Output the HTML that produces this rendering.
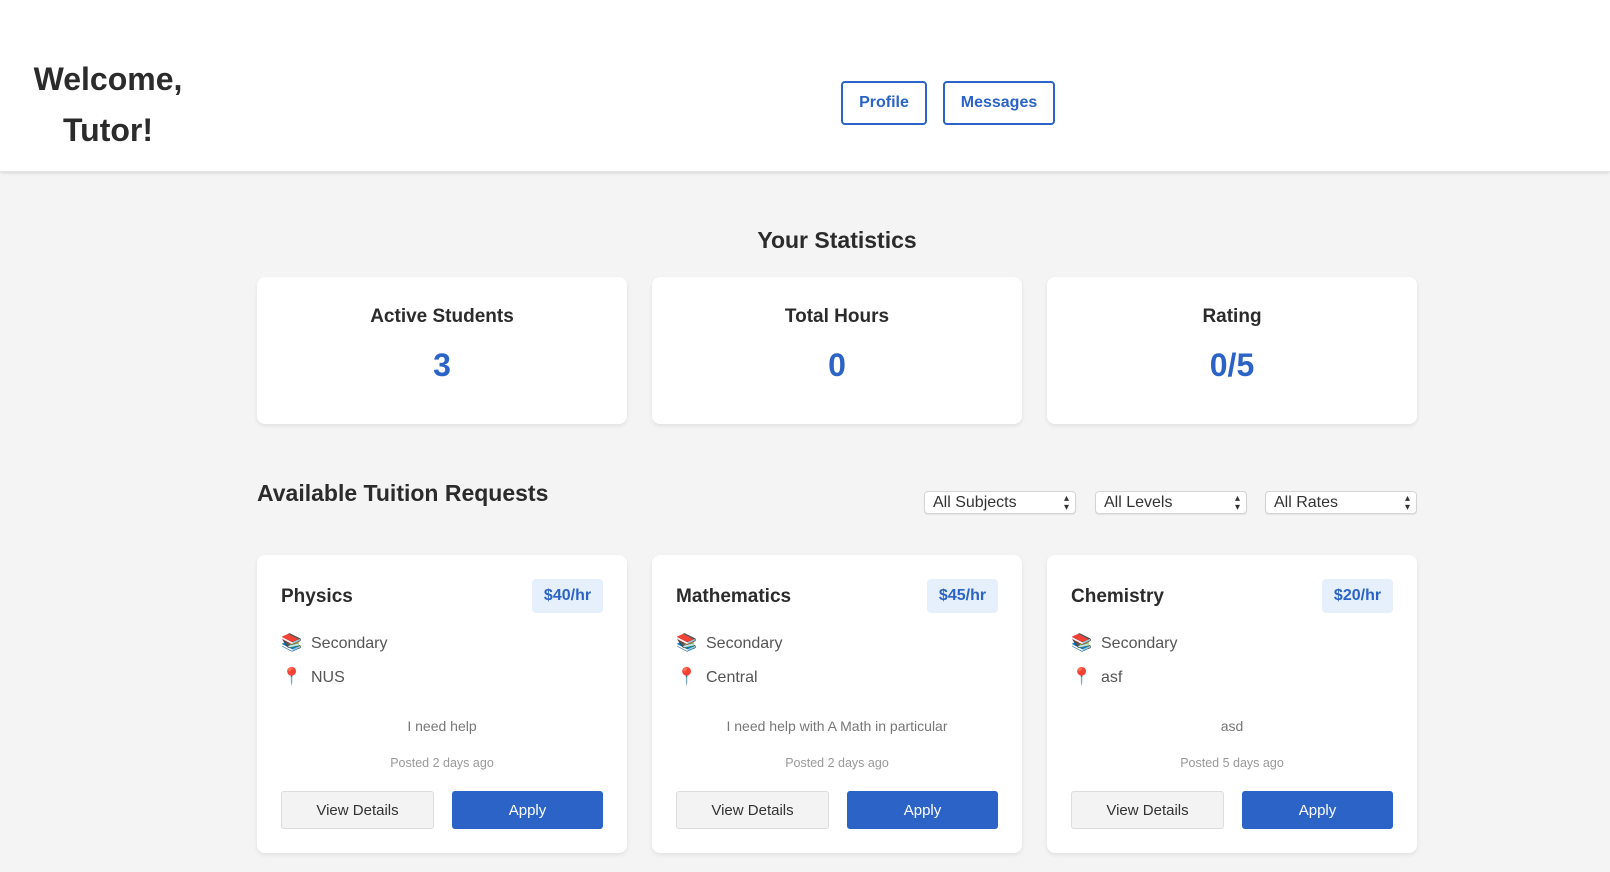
<!DOCTYPE html>
<html><head><meta charset="utf-8"><style>
*{box-sizing:border-box;margin:0;padding:0}
body{width:1610px;height:872px;overflow:hidden;background:#f4f4f4;font-family:"Liberation Sans",sans-serif;color:#2b2b2b;position:relative}
.hdr{position:absolute;left:0;top:0;width:1610px;height:172px;background:#fff;box-shadow:0 1px 3px rgba(0,0,0,.12);border-bottom:1px solid #e4e4e4}
.welcome{position:absolute;left:28px;top:54px;width:160px;text-align:center;font-size:32px;font-weight:bold;line-height:51px;color:#2b2b2b}
.hbtn{position:absolute;top:81px;height:44px;border:2px solid #2b63c6;border-radius:4px;background:#fff;color:#2b63c6;font-weight:bold;font-size:16px;display:flex;align-items:center;justify-content:center}
.h2{position:absolute;font-size:23px;font-weight:bold;color:#2b2b2b}
.card{position:absolute;background:#fff;border-radius:8px;box-shadow:0 2px 5px rgba(0,0,0,.08)}
.stat{top:277px;height:147px;width:370px;text-align:center}
.stat .l{position:absolute;top:29px;width:100%;font-size:19px;font-weight:bold}
.stat .v{position:absolute;top:70px;width:100%;font-size:32px;font-weight:bold;color:#2b63c6}
.sel{position:absolute;top:491px;height:23px;width:152px;background:#fff;border:1px solid #d4d4d4;border-radius:4px;font-size:16px;padding-left:8px;line-height:21px;color:#333;box-shadow:0 1px 1px rgba(0,0,0,.08)}
.sel:after{content:"▴";position:absolute;right:6px;top:-4px;font-size:10px}
.sel:before{content:"▾";position:absolute;right:6px;top:5px;font-size:10px}
.req{top:555px;width:370px;height:298px}
.req .t{position:absolute;left:24px;top:31px;font-size:19px;font-weight:bold}
.req .p{position:absolute;right:24px;top:24px;width:71px;height:34px;background:#e5f0fc;border-radius:4px;color:#2b63c6;font-weight:bold;font-size:16px;text-align:center;line-height:34px}
.req .r{position:absolute;left:24px;font-size:16px;color:#555}
.req .r span{display:inline-block;width:30px;font-size:17px}
.req .d{position:absolute;top:163px;width:100%;text-align:center;font-size:14px;color:#777}
.req .ps{position:absolute;top:201px;width:100%;text-align:center;font-size:12.5px;color:#999}
.vb{position:absolute;left:24px;top:236px;width:153px;height:38px;background:#f3f3f3;border:1px solid #ddd;border-radius:3px;text-align:center;line-height:38px;font-size:15px;color:#333}
.ab{position:absolute;left:195px;top:236px;width:151px;height:38px;background:#2b63c6;border-radius:3px;text-align:center;line-height:40px;font-size:15px;color:#fff}
</style></head><body>
<div class="hdr">
<div class="welcome">Welcome,<br>Tutor!</div>
<div class="hbtn" style="left:841px;width:86px">Profile</div>
<div class="hbtn" style="left:943px;width:112px">Messages</div>
</div>
<div class="h2" style="left:0;width:1674px;text-align:center;top:227px">Your Statistics</div>
<div class="card stat" style="left:257px"><div class="l">Active Students</div><div class="v">3</div></div>
<div class="card stat" style="left:652px"><div class="l">Total Hours</div><div class="v">0</div></div>
<div class="card stat" style="left:1047px"><div class="l">Rating</div><div class="v">0/5</div></div>
<div class="h2" style="left:257px;top:480px">Available Tuition Requests</div>
<div class="sel" style="left:924px">All Subjects</div>
<div class="sel" style="left:1095px">All Levels</div>
<div class="sel" style="left:1265px">All Rates</div>

<div class="card req" style="left:257px"><div class="t">Physics</div><div class="p">$40/hr</div>
<div class="r" style="top:78px"><span>📚</span>Secondary</div><div class="r" style="top:112px"><span>📍</span>NUS</div>
<div class="d">I need help</div><div class="ps">Posted 2 days ago</div><div class="vb">View Details</div><div class="ab">Apply</div></div>
<div class="card req" style="left:652px"><div class="t">Mathematics</div><div class="p">$45/hr</div>
<div class="r" style="top:78px"><span>📚</span>Secondary</div><div class="r" style="top:112px"><span>📍</span>Central</div>
<div class="d">I need help with A Math in particular</div><div class="ps">Posted 2 days ago</div><div class="vb">View Details</div><div class="ab">Apply</div></div>
<div class="card req" style="left:1047px"><div class="t">Chemistry</div><div class="p">$20/hr</div>
<div class="r" style="top:78px"><span>📚</span>Secondary</div><div class="r" style="top:112px"><span>📍</span>asf</div>
<div class="d">asd</div><div class="ps">Posted 5 days ago</div><div class="vb">View Details</div><div class="ab">Apply</div></div>
</body></html>
